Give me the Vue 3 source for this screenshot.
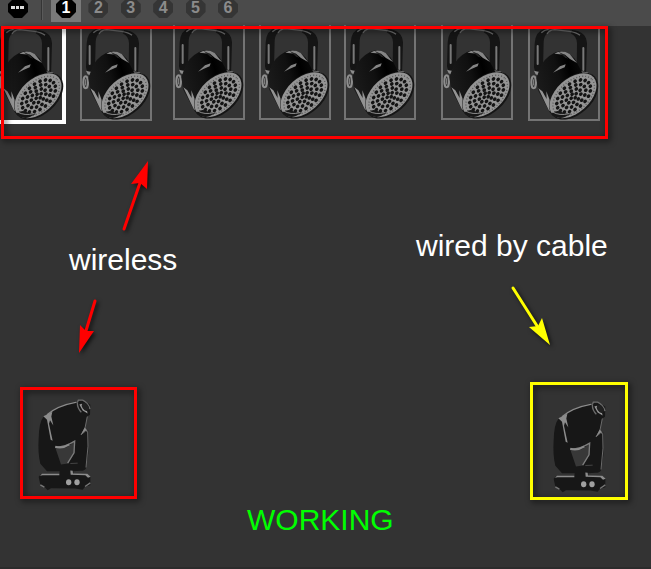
<template>
  <div class="app">
    <nav class="toolbar">
      <button class="chip chip--menu" type="button" aria-label="More">
        <svg class="chip__dots" viewBox="0 0 14 4">
          <rect x="0" y="0" width="4" height="3" />
          <rect x="5" y="0" width="3" height="3" />
          <rect x="9" y="0" width="4" height="3" />
        </svg>
      </button>
      <span class="toolbar__divider"></span>
      <div class="pages">
        <button
          v-for="n in 6"
          :key="n"
          class="page"
          :class="{ 'page--active': n === page }"
          type="button"
          @click="page = n"
        >
          <span class="chip">{{ n }}</span>
        </button>
      </div>
    </nav>

    <main class="stage">
      <!-- shared drawings -->
      <svg class="defs" aria-hidden="true">
        <defs>
          <linearGradient id="can" x1="0" y1="0.6" x2="1" y2="0.3">
            <stop offset="0" stop-color="#1c1c1c" />
            <stop offset="0.4" stop-color="#101010" />
            <stop offset="0.6" stop-color="#000" />
            <stop offset="1" stop-color="#151515" />
          </linearGradient>
          <symbol id="par" viewBox="0 0 216 288">
            <path d="M22 140 L18 124 L20 52 Q22 16 50 8 L63 6 L59 21 Q48 28 47 48 L45 128 Z" fill="#151515" />
            <path d="M132 12 Q175 16 177 52 L174 152 L146 138 L147 52 Q146 30 128 22 Z" fill="#151515" />
            <path d="M40 20 Q49 11 62 10 M57 24 Q64 12 80 11 L124 16 Q146 19 156 28" fill="none" stroke="#6c6c6c" stroke-width="4" />
            <path d="M29 60 V114 M166 66 V132" stroke="#787878" stroke-width="6" stroke-linecap="round" />
            <path d="M18 134 L36 139 L32 149 L23 145 Z M148 134 L178 139 Q205 150 207 188 L194 164 L158 145 Z" fill="#8c8c8c" />
            <ellipse cx="17" cy="169" rx="7" ry="18" fill="#333" stroke="#8e8e8e" stroke-width="6" />
            <path d="M17 160 V178" stroke="#8e8e8e" stroke-width="3" />
            <path d="M40 116 Q61 84 94 76 Q122 77 140 98 L165 144 L201 168 Q216 204 179 241 Q143 279 95 275 L66 260 L30 193 L25 156 Z" fill="url(#can)" />
            <path d="M79 83 Q101 70 125 84 L147 111 L126 99 L111 86 Z" fill="#858585" />
            <path d="M92 78 L112 87 L121 99 L110 94 Z" fill="#222" />
            <path d="M75 140 L96 121 L113 115 L110 124 L91 132 Z" fill="#858585" />
            <path d="M31 187 L43 196 L56 219 L55 196 L64 219 L74 262 L62 252 Z" fill="#939393" />
            <g transform="translate(137 210) rotate(-42)">
              <ellipse rx="86" ry="55" fill="#151515" />
              <ellipse cx="-1" cy="-2" rx="83" ry="51" fill="#949494" />
              <ellipse
                rx="74"
                ry="44"
                fill="none"
                stroke="#5a5a5a"
                stroke-width="4"
                stroke-dasharray="3 6"
              />
              <ellipse
                v-for="(dot, i) in leds"
                :key="i"
                :cx="dot.x"
                :cy="dot.y"
                rx="6"
                ry="5"
                fill="#141414"
              />
            </g>
            <path d="M68 263 Q89 281 109 274 L130 263 Q108 265 96 256 Q84 252 68 263 Z" fill="#171717" />
            <path d="M74 258 Q94 270 123 263" fill="none" stroke="#8c8c8c" stroke-width="3" />
          </symbol>

          <symbol id="head" viewBox="60 50 180 290">
            <path d="M86 108 Q129 72 186 62 L203 58 L226 73 L225 103 L216 109 L210 144 L220 150 L220 218 L213 263 Q211 270 197 271 L175 272 L175 281 L216 280 L226 288 L226 314 L210 319 L203 328 L180 324 L108 323 L98 329 L88 319 L76 313 L71 289 L78 281 L133 281 L134 272 L96 272 L76 250 Q68 216 71 174 Q72 124 86 108 Z" fill="#171717" />
            <path d="M121 202 Q157 208 177 183 L179 216 L159 249 L138 252 Z" fill="#383838" />
            <path d="M120 200 Q149 201 179 182 L177 217 L158 248" fill="none" stroke="#7c7c7c" stroke-width="4" />
            <path d="M121 199 Q143 205 163 192" fill="none" stroke="#8c8c8c" stroke-width="6" />
            <path d="M96 103 Q126 76 185 65" fill="none" stroke="#8c8c8c" stroke-width="4" />
            <path d="M85 107 L112 94 L109 108 L115 135 L105 119 L102 130 L113 181 L107 178 L96 118 Z" fill="#8c8c8c" />
            <path d="M187 66 L190 59 L203 59 Q220 67 225 86 M187 67 Q187 84 199 95" fill="none" stroke="#6c6c6c" stroke-width="4" />
            <path d="M193 72 L201 70 L214 85 L218 99 L203 90 Z" fill="#999" />
            <ellipse cx="211" cy="79" rx="9" ry="13" transform="rotate(-35 211 79)" fill="#202020" />
            <path d="M217 108 L210 143 L198 163 L212 151 L218 153 L219 197 L213 261" fill="none" stroke="#6a6a6a" stroke-width="3" />
            <path d="M199 161 L209 141 L218 151 L211 151 Z" fill="#8c8c8c" />
            <path d="M76 313 L88 320 M210 318 L226 307" fill="none" stroke="#777" stroke-width="4" />
            <path d="M166 249 L188 248" fill="none" stroke="#444" stroke-width="3" />
            <path d="M75 286 L81 280 H133 V284 H83 Z M166 270 L173 271 L174 279 L217 280 L227 289 L219 292 L211 284 L167 283 Z" fill="#8c8c8c" />
            <ellipse cx="161" cy="305" rx="8" ry="9" fill="#a0a0a0" />
            <ellipse cx="186" cy="305" rx="8" ry="9" fill="#a0a0a0" />
          </symbol>
        </defs>
      </svg>

      <div
        v-for="par in pars"
        :key="par.x"
        class="par"
        :class="{ 'par--selected': par.selected }"
        :style="{ left: par.x + 'px', top: par.y + 'px' }"
      >
        <svg class="par__image"><use href="#par" /></svg>
      </div>

      <svg
        v-for="head in heads"
        :key="head.x"
        class="head"
        :style="{ left: head.x + 'px', top: head.y + 'px' }"
      >
        <use href="#head" />
      </svg>

      <div
        v-for="f in frames"
        :key="f.x"
        class="frame"
        :class="`frame--${f.color}`"
        :style="{ left: f.x + 'px', top: f.y + 'px', width: f.w + 'px', height: f.h + 'px' }"
      ></div>

      <svg class="arrows">
        <g v-for="a in arrows" :key="a.head" :class="`arrow--${a.color}`">
          <path class="arrow__line" :d="a.line" />
          <path class="arrow__head" :d="a.head" />
        </g>
      </svg>

      <p
        v-for="l in labels"
        :key="l.text"
        class="label"
        :class="{ 'label--ok': l.ok }"
        :style="{ left: l.x + 'px', top: l.y + 'px' }"
      >{{ l.text }}</p>
    </main>
  </div>
</template>

<script setup>
import { ref } from 'vue'

const page = ref(1)

// positions are relative to the stage, below the toolbar
const pars = [
  { x: -7, y: 0, selected: true },
  { x: 80, y: 0 },
  { x: 173, y: -1 },
  { x: 259, y: -1 },
  { x: 344, y: -1 },
  { x: 441, y: -1 },
  { x: 528, y: 0 },
]

const heads = [
  { x: 35, y: 371 },
  { x: 550, y: 373 },
]

const frames = [
  { x: 1, y: 0, w: 607, h: 113, color: 'red' },
  { x: 20, y: 361, w: 117, h: 112, color: 'red' },
  { x: 530, y: 356, w: 98, h: 118, color: 'yellow' },
]

const arrows = [
  { color: 'red', line: 'M124 203 L141 154', head: 'M148 135 L147 163 L140 157 L131 158 Z' },
  { color: 'red', line: 'M95 275 L85 308', head: 'M79 327 L80 299 L86 305 L94 305 Z' },
  { color: 'yellow', line: 'M513 262 L539 303', head: 'M550 319 L529 301 L538 300 L542 292 Z' },
]

const labels = [
  { text: 'wireless', x: 69, y: 217 },
  { text: 'wired by cable', x: 416, y: 203 },
  { text: 'WORKING', x: 247, y: 477, ok: true },
]

// LED rings: [count, rx, ry]
const rings = [
  [4, 10, 7],
  [9, 26, 16],
  [14, 43, 26],
  [19, 60, 36],
]

const leds = rings.flatMap(([count, rx, ry]) =>
  Array.from({ length: count }, (_, i) => {
    const t = (i / count) * Math.PI * 2
    return { x: Math.cos(t) * rx, y: Math.sin(t) * ry }
  })
)
</script>

<style>
body {
  margin: 0;
  background: #333;
}
</style>

<style scoped>
.app {
  display: flex;
  flex-direction: column;
  min-height: 100vh;
  font-family: "Liberation Sans", Arial, sans-serif;
}

/* toolbar */
.toolbar {
  display: flex;
  align-items: flex-start;
  height: 26px;
  padding-left: 8px;
  background: #4b4b4b;
}

.toolbar__divider {
  width: 1px;
  height: 20px;
  margin: 0 8px 0 13px;
  background: #353535;
  border-right: 1px solid #5a5a5a;
}

.pages {
  display: flex;
  justify-content: space-between;
  width: 192px;
}

.page {
  display: flex;
  justify-content: center;
  width: 30px;
  height: 22px;
  padding: 0;
  border: none;
  background: none;
  font-family: inherit;
}

.page--active {
  background: #797979;
}

.chip {
  display: flex;
  align-items: center;
  justify-content: center;
  width: 20px;
  height: 20px;
  margin-top: -2px;
  padding: 0;
  border: none;
  background: #353535;
  color: #8b8b8b;
  font-size: 16px;
  font-weight: bold;
  line-height: 20px;
  clip-path: polygon(30% 0, 70% 0, 100% 30%, 100% 70%, 70% 100%, 30% 100%, 0 70%, 0 30%);
}

.chip--menu,
.page--active .chip {
  background: #000;
  color: #fff;
}

.chip__dots {
  width: 14px;
  height: 4px;
  fill: #ddd;
}

/* stage */
.stage {
  position: relative;
  flex: 1;
  overflow-x: clip;
  background: #333;
  border-bottom: 2px solid #2c2c2c;
}

.defs {
  position: absolute;
  width: 0;
  height: 0;
}

.par {
  position: absolute;
  box-sizing: border-box;
  width: 72px;
  height: 95px;
  border: 2px solid #747474;
  border-top: none;
}

.par--selected {
  width: 73px;
  height: 98px;
  border-width: 0 4px 4px 2px;
  border-color: #fff;
}

.par__image {
  display: block;
  width: 72px;
  height: 96px;
  margin-left: -2px;
}

.head {
  position: absolute;
  width: 60px;
  height: 97px;
}

.frame {
  position: absolute;
  box-sizing: border-box;
  border: 3px solid;
  filter: drop-shadow(2px 2px 3px rgba(0, 0, 0, 0.75));
}

.frame--red {
  border-color: #f00;
}

.frame--yellow {
  border-color: #ff0;
}

.arrows {
  position: absolute;
  top: 0;
  left: 0;
  width: 100%;
  height: 100%;
  filter: drop-shadow(2px 2px 2px rgba(0, 0, 0, 0.7));
}

.arrow__line {
  fill: none;
  stroke-width: 3;
  stroke-linecap: round;
}

.arrow--red {
  fill: #f00;
  stroke: #f00;
}

.arrow--yellow {
  fill: #ff0;
  stroke: #ff0;
}

.arrow__head {
  stroke: none;
}

.label {
  position: absolute;
  margin: 0;
  color: #fff;
  font-size: 30px;
  line-height: 34px;
  white-space: nowrap;
}

.label--ok {
  color: #0f0;
}
</style>
